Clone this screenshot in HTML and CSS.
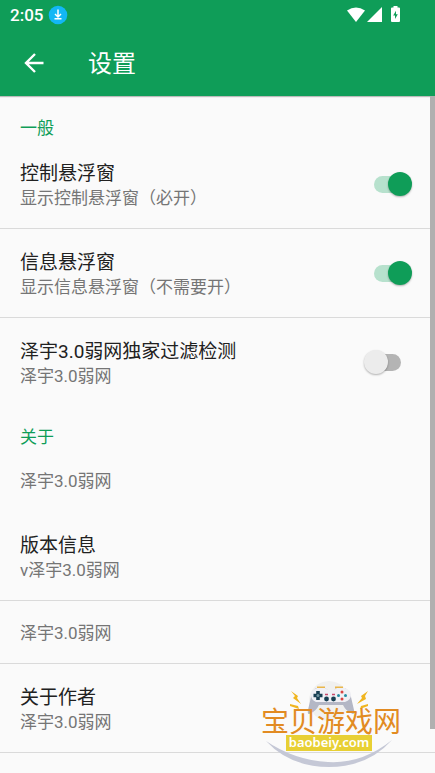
FILE: index.html
```html
<!DOCTYPE html>
<html lang="zh-CN">
<head>
<meta charset="utf-8">
<meta name="viewport" content="width=device-width, initial-scale=1">
<title>设置</title>
<link rel="stylesheet" href="styles.css">
</head>
<body>
<header class="header">
  <div class="status">
    <span class="clock">2:05</span>
    <svg class="download" width="20" height="20" viewBox="0 0 20 20" aria-hidden="true">
      <circle cx="10" cy="10" r="9.3" fill="#12b7f5"/>
      <path d="M10 4.500v7M7 9l3 3 3-3M6.500 13.800h7" fill="none" stroke="#fff" stroke-width="1.500"/>
    </svg>
    <svg class="signals" width="54" height="16" viewBox="0 0 54 16" fill="#fff" aria-hidden="true">
      <path d="M0 3.500Q9 -2.500 18 3.500L9 15z"/>
      <path d="M35 0v15H20z"/>
      <path fill-rule="evenodd" d="M46.500 -1h4v1.500H52q1 0 1 1V14q0 1-1 1h-7q-1 0-1-1V1.500q0-1 1-1h1.500zM49 3.800L46.200 8.500H48v3.500l2.800-4.700H49z"/>
    </svg>
  </div>
  <div class="toolbar">
    <button class="back" type="button" aria-label="返回">
      <svg width="20" height="20" viewBox="0 0 20 20" fill="none" stroke="#fff" stroke-width="2.400" aria-hidden="true"><path d="M19.500 10H2M11 1L2 10l9 9"/></svg>
    </button>
    <h1 class="heading">设置</h1>
  </div>
</header>
<main class="content">
  <h2 class="category">一般</h2>
  <label class="row divided">
    <span class="text"><span class="title">控制悬浮窗</span><span class="summary">显示控制悬浮窗（必开）</span></span>
    <input class="switch" type="checkbox" role="switch" checked>
  </label>
  <label class="row divided">
    <span class="text"><span class="title">信息悬浮窗</span><span class="summary">显示信息悬浮窗（不需要开）</span></span>
    <input class="switch" type="checkbox" role="switch" checked>
  </label>
  <label class="row">
    <span class="text"><span class="title">泽宇3.0弱网独家过滤检测</span><span class="summary">泽宇3.0弱网</span></span>
    <input class="switch" type="checkbox" role="switch">
  </label>
  <h2 class="category">关于</h2>
  <div class="row"><span class="text"><span class="summary">泽宇3.0弱网</span></span></div>
  <div class="row divided">
    <span class="text"><span class="title">版本信息</span><span class="summary">v泽宇3.0弱网</span></span>
  </div>
  <div class="row divided"><span class="text"><span class="summary">泽宇3.0弱网</span></span></div>
  <div class="row divided">
    <span class="text"><span class="title">关于作者</span><span class="summary">泽宇3.0弱网</span></span>
  </div>
  <div class="scrollbar"></div>
</main>
<svg class="badge" width="150" height="92" viewBox="0 0 150 92" role="img" aria-label="宝贝游戏网 baobeiy.com">
  <circle cx="67" cy="20" r="20" fill="#f0f0ef"/>
  <path d="M55 6.500h8M73 6.500h8" stroke="#e9b64a" stroke-width="2"/>
  <path d="M54 7h9l4 3h4l4-3h8q5 3 6 9l3 13q1 6-3 3-5-2-8-8H57q-3 6-8 8-4 3-3-3l3-13q1-6 5-9z" fill="#b4b7c5"/>
  <path d="M55 7h8l3 2h6l3-2h8q6 2 6 7t-6 7H54q-5-2-5-7t6-7z" fill="#f0f0f5"/>
  <path d="M56 10v9M51.500 14.500h9" stroke="#183f52" stroke-width="3.600"/>
  <circle cx="56" cy="14.500" r="1.500" fill="#6f929f"/>
  <g fill="#d94242"><circle cx="80" cy="11" r="1.500"/><circle cx="80" cy="18" r="1.500"/></g>
  <g fill="#238da4"><circle cx="76.500" cy="14.500" r="1.500"/><circle cx="83.500" cy="14.500" r="1.500"/></g>
  <g fill="#183f52"><circle cx="64.500" cy="18" r="2.400"/><circle cx="71.500" cy="18" r="2.400"/></g>
  <path d="M63 13.500h3M70 13.500h3" stroke="#c8496c" stroke-width="1.500"/>
  <g fill="#f0b51f">
    <path d="M29 10l7 5-1 2 4 6-8-6 2-2zM28 23l8 2 1 3-9-3z"/>
    <path d="M106 10l-7 5 1 2-5 6 9-5-1-3zM106 23l-7 2-1 3 8-3z"/>
  </g>
  <path d="M4 60Q32 79 66 81T130 59Q106 86 67 86T4 60z" fill="#c5c8d6"/>
  <text class="badge-name" x="-1" y="51">宝贝游戏网</text>
  <rect x="24" y="54" width="86" height="16" fill="#e8d034"/>
  <text class="badge-url" x="67" y="66" text-anchor="middle">baobeiy.com</text>
</svg>
</body>
</html>
```
FILE: styles.css
```css
* { box-sizing: border-box; }

body {
  margin: 0;
  min-height: 100vh;
  position: relative;
  display: flex;
  flex-direction: column;
  background: #fafafa;
  color: #212121;
  font-family: Roboto, "Noto Sans CJK SC", sans-serif;
}

.header {
  background: #0f9d58;
  color: #fff;
  box-shadow: 0 1px 1px rgba(0, 0, 0, 0.25);
}

.status {
  display: flex;
  align-items: center;
  height: 30px;
  padding: 0 34px 0 10px;
}

.clock {
  font-size: 17px;
  font-weight: 500;
  line-height: 30px;
}

.download { margin-left: 5px; }

.signals {
  margin-left: auto;
  overflow: visible;
}

.toolbar {
  display: flex;
  align-items: center;
  height: 66px;
}

.back {
  display: flex;
  align-items: center;
  justify-content: center;
  width: 68px;
  height: 66px;
  padding: 0;
  border: 0;
  background: none;
}

.heading {
  margin: 0;
  padding: 2px 0 0 20px;
  font-size: 24px;
  font-weight: 400;
  line-height: 32px;
}

.content {
  position: relative;
  flex: 1;
  padding-top: 1px;
}

.category {
  margin: 0;
  padding: 19px 20px 0;
  height: 42px;
  color: #0f9d58;
  font-size: 17px;
  font-weight: 400;
  line-height: 24px;
}

.row {
  display: flex;
  align-items: center;
  justify-content: space-between;
  padding: 19px 23px 19px 20px;
  border-bottom: 1px solid transparent;
}

.category + .row { margin-top: 1px; }

.row:has(+ .category) { margin-bottom: -1px; }

.divided { border-bottom-color: #dadada; }

.text {
  display: flex;
  flex-direction: column;
  padding-top: 2px;
}

.title {
  font-size: 19px;
  line-height: 26px;
}

.summary {
  color: #757575;
  font-size: 17px;
  line-height: 22px;
}

.switch {
  appearance: none;
  position: relative;
  flex: none;
  width: 48px;
  height: 24px;
  margin: 0;
}

.switch::before {
  content: "";
  position: absolute;
  inset: 4px 11px 3px 10px;
  border-radius: 9px;
  background: #b4b4b4;
}

.switch::after {
  content: "";
  position: absolute;
  top: 0;
  left: 0;
  width: 24px;
  height: 24px;
  border-radius: 50%;
  background: #ececec;
  box-shadow: 0 1px 2px rgba(0, 0, 0, 0.3);
}

.switch:checked::before { background: #b7e1cd; }

.switch:checked::after {
  left: auto;
  right: 0;
  background: #0f9d58;
}

.scrollbar {
  position: absolute;
  top: 0;
  right: 0;
  width: 5px;
  height: 93.5%;
  background: #b0b0b0;
}

.badge {
  position: absolute;
  right: 23px;
  bottom: 0;
}

.badge-name {
  fill: #e28b22;
  font-size: 28px;
  font-weight: 400;
}

.badge-url {
  fill: #fff;
  font-family: "Noto Sans", sans-serif;
  font-size: 13px;
  font-weight: 600;
}
```
